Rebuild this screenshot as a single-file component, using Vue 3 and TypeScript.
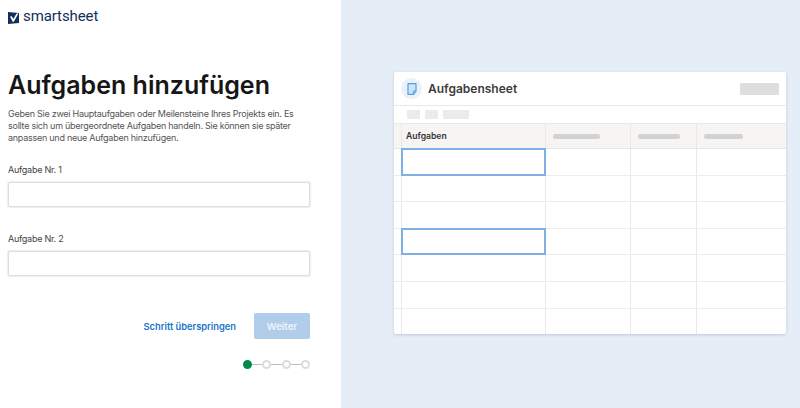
<script setup lang="ts">
const columns = ['first', 'second', 'third', 'fourth']
const rows = [true, false, false, true, false, false, false]
const skeletonWidths = [47, 42, 39]
</script>

<template>
  <div class="page">
    <section class="left">
      <header class="brand">
        <svg class="mark" width="11" height="12" viewBox="0 0 11 12">
          <path d="M0 0 L11 1 V11 L0 12 Z" fill="#10305a" />
          <path d="M2 4.6 L3.8 4.2 L5.3 7 L8.6 1.4 L10.4 1.4 L5.8 9.8 H4.6 Z" fill="#fff" />
        </svg>
        <span class="wordmark">smartsheet</span>
      </header>
      <h1>Aufgaben hinzufügen</h1>
      <p class="lead">
        Geben Sie zwei Hauptaufgaben oder Meilensteine Ihres Projekts ein. Es<br />
        sollte sich um übergeordnete Aufgaben handeln. Sie können sie später<br />
        anpassen und neue Aufgaben hinzufügen.
      </p>
      <label class="field first">
        <span>Aufgabe Nr. 1</span>
        <input type="text" />
      </label>
      <label class="field second">
        <span>Aufgabe Nr. 2</span>
        <input type="text" />
      </label>
      <div class="actions">
        <a class="skip">Schritt überspringen</a>
        <button class="next" type="button">Weiter</button>
      </div>
      <div class="steps">
        <i class="dot active"></i><b></b><i class="dot"></i><b></b><i class="dot"></i><b></b><i class="dot"></i>
      </div>
    </section>

    <section class="right">
      <div class="card">
        <div class="card-head">
          <span class="avatar">
            <svg width="10" height="12" viewBox="0 0 10 12">
              <path d="M1 0.6 H9 V8 L6.6 11.4 H1 Z" fill="#cfe3f8" stroke="#4f9fe6" stroke-width="1.2" stroke-linejoin="round" />
              <path d="M6.2 11 V8 H9.2" fill="none" stroke="#4f9fe6" stroke-width="0.9" />
            </svg>
          </span>
          <span class="sheet-title">Aufgabensheet</span>
          <span class="head-btn"></span>
        </div>
        <div class="toolbar">
          <span class="tool"></span>
          <span class="tool"></span>
          <span class="tool wide"></span>
        </div>
        <div class="grid head-row">
          <div class="gutter"></div>
          <div class="cell title-cell">Aufgaben</div>
          <div v-for="w in skeletonWidths" :key="w" class="cell">
            <span class="bar" :style="{ width: w + 'px' }"></span>
          </div>
        </div>
        <div v-for="(selected, i) in rows" :key="i" class="grid row">
          <div class="gutter"></div>
          <div v-for="c in columns" :key="c" class="cell" :class="{ selected: selected && c === 'first' }"></div>
        </div>
      </div>
    </section>
  </div>
</template>

<style>
html, body { margin: 0; background: #fff; }
</style>

<style scoped>
.page {
  display: flex;
  width: 800px;
  height: 408px;
  overflow: hidden;
  font-family: Inter, "Liberation Sans", sans-serif;
}
.left {
  width: 341px;
  box-sizing: border-box;
  padding: 8px 31px 0 8px;
  background: #fff;
  display: flex;
  flex-direction: column;
}
.brand { display: flex; align-items: center; gap: 4px; height: 16px; }
.mark { margin-top: 3px; flex: none; }
.wordmark {
  font-family: Roboto, sans-serif;
  font-size: 15px;
  line-height: 16px;
  color: #10305a;
  letter-spacing: -0.1px;
}
h1 {
  margin: 45px 0 0;
  font-size: 25px;
  line-height: 32px;
  font-weight: 600;
  color: #161616;
  white-space: nowrap;
}
.lead {
  margin: 7px 0 0;
  font-size: 9px;
  letter-spacing: -0.26px;
  line-height: 12px;
  color: #555;
  white-space: nowrap;
}
.field { display: flex; flex-direction: column; }
.field span { font-size: 9px; letter-spacing: -0.25px; line-height: 12px; color: #444; }
.field input {
  margin-top: 6px;
  height: 25px;
  box-sizing: border-box;
  border: 1px solid #dedede;
  border-radius: 2px;
  background: #fff;
  padding: 0;
  box-shadow: 0 0 1px 1px #eee;
}
.field.first { margin-top: 20px; }
.field.second { margin-top: 26px; }
.actions {
  margin-top: 37px;
  display: flex;
  justify-content: flex-end;
  align-items: center;
  gap: 18px;
}
.skip { font-size: 9.3px; font-weight: 600; color: #1a73c8; }
.next {
  width: 56px;
  height: 26px;
  border: 0;
  border-radius: 2px;
  background: #b2cdea;
  color: #eef4fb;
  font: 600 9.6px Inter, sans-serif;
  padding: 0;
}
.steps { margin-top: 21px; display: flex; justify-content: flex-end; align-items: center; }
.dot {
  width: 9px;
  height: 9px;
  box-sizing: border-box;
  border: 2px solid #dcdcdc;
  border-radius: 50%;
  background: #fff;
}
.dot.active { background: #008a50; border-color: #008a50; }
.steps b { width: 10.5px; height: 1px; background: #bdbdbd; }
.right {
  flex: 1;
  background: #e5edf6;
  padding: 72px 14px 0 53px;
}
.card {
  height: 262px;
  background: #fff;
  border-radius: 2px;
  box-shadow: 0 1px 3px rgba(60, 80, 100, 0.22);
  overflow: hidden;
}
.card-head {
  height: 34px;
  box-sizing: border-box;
  border-bottom: 1px solid #e8e8e8;
  display: flex;
  align-items: center;
  padding: 0 7px;
}
.avatar {
  width: 21px;
  height: 21px;
  border-radius: 50%;
  background: #eaf1f9;
  display: flex;
  align-items: center;
  justify-content: center;
}
.sheet-title { margin-left: 6px; font-size: 12px; font-weight: 600; color: #3c3c3c; }
.head-btn { margin-left: auto; width: 39px; height: 12px; background: #dedede; border-radius: 1px; }
.toolbar {
  height: 18px;
  box-sizing: border-box;
  border-bottom: 1px solid #e8e8e8;
  display: flex;
  align-items: center;
  gap: 5px;
  padding: 0 13px;
}
.tool { width: 13px; height: 9px; background: #ebebeb; border-radius: 1px; }
.tool.wide { width: 26px; }
.grid {
  display: grid;
  grid-template-columns: 8px 144px 85px 66px 89px;
  box-sizing: border-box;
  border-bottom: 1px solid #ececec;
}
.head-row { height: 25px; background: #f6f5f3; border-bottom-color: #e6e6e6; }
.row { height: 26.6px; }
.row:last-child { border-bottom: 0; }
.gutter { border-right: 1px solid #e8e8e8; }
.cell {
  border-right: 1px solid #e8e8e8;
  display: flex;
  align-items: center;
  padding-left: 7px;
  box-sizing: border-box;
  min-width: 0;
}
.cell:last-child { border-right: 0; }
.title-cell {
  padding-left: 4px;
  font-size: 8.6px;
  font-weight: 600;
  color: #333;
}
.bar { height: 5px; border-radius: 3px; background: #d2d2d2; }
.selected {
  border: 2px solid #7fb0e4;
  margin: -1px 0 -1px -1px;
  position: relative;
}
</style>
